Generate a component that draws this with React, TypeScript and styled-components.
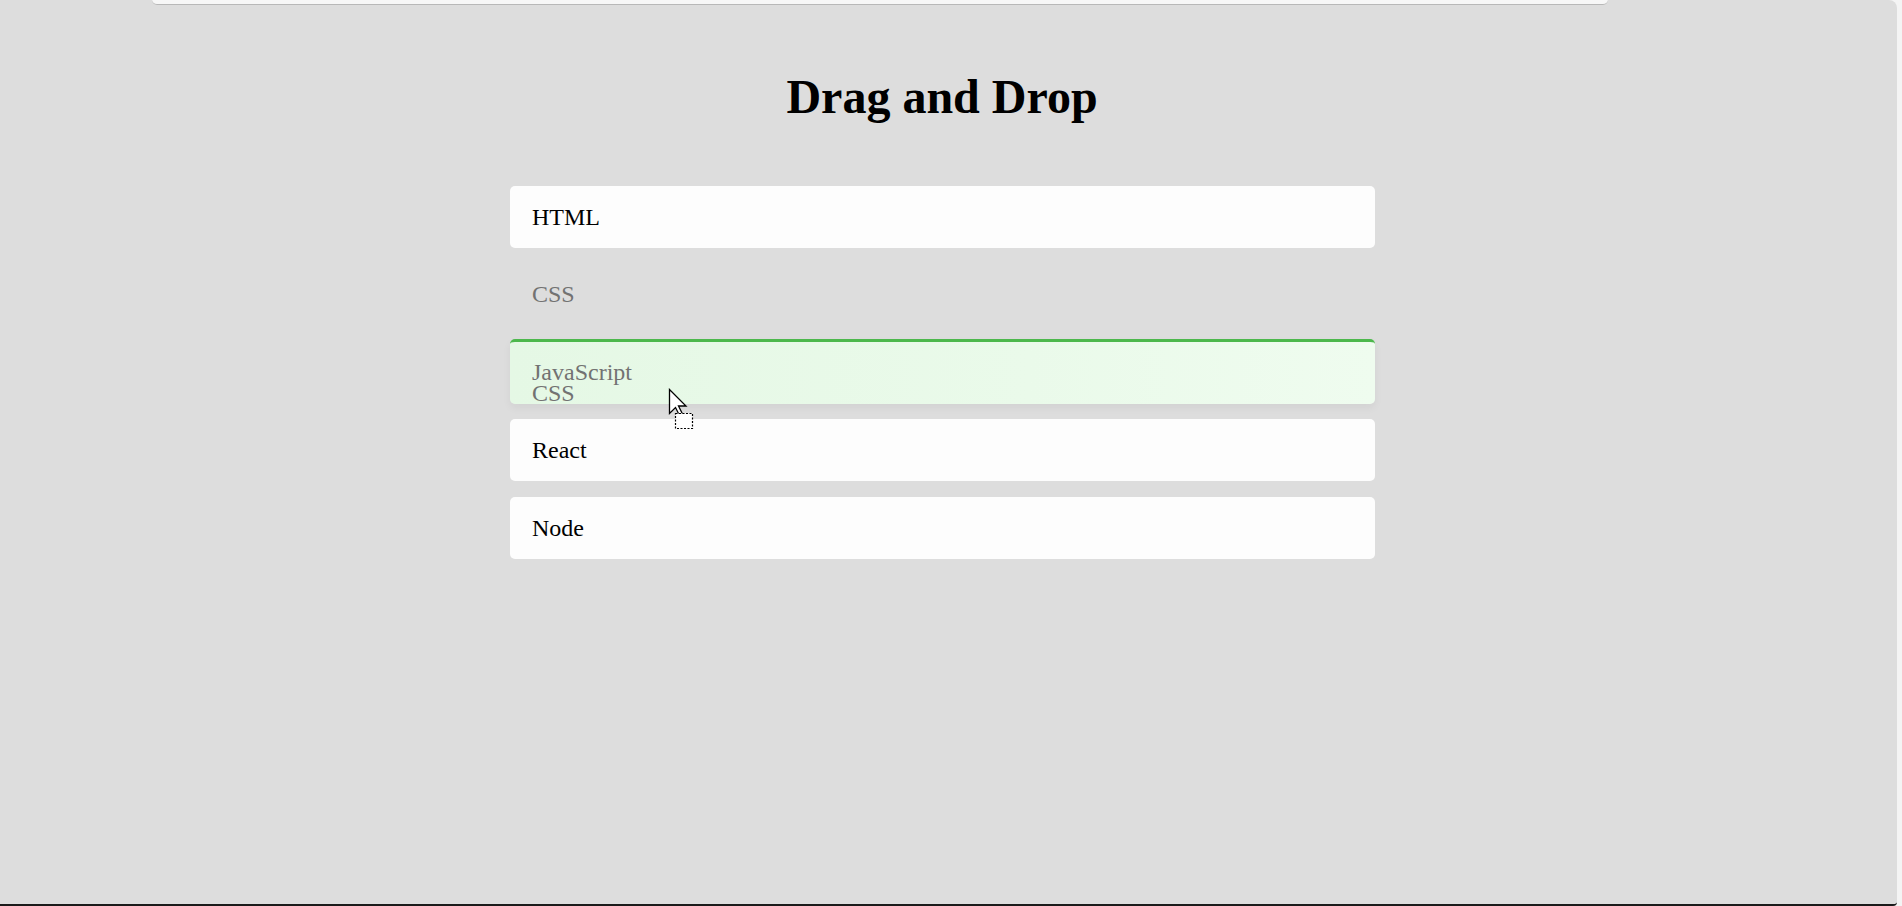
import React from "react";
import styled, { createGlobalStyle } from "styled-components";

const Global = createGlobalStyle`
  html, body { margin: 0; padding: 0; }
  body {
    background: #f4f4f4;
    font-family: "Liberation Serif", "Times New Roman", serif;
    overflow: hidden;
  }
`;

const Stage = styled.div`
  position: relative;
  box-sizing: border-box;
  width: calc(100% - 5px);
  height: 906px;
  background: #dddddd;
  border-bottom: 2px solid #1a1a1a;
  border-top-right-radius: 8px;
  border-bottom-right-radius: 4px;
  padding: 70px 13px 0 0;
  display: flex;
  flex-direction: column;
  align-items: center;
`;

const TopBar = styled.div`
  position: absolute;
  top: 0;
  left: 152px;
  width: 1456px;
  height: 4px;
  background: #f7f7f7;
  border-bottom: 1px solid #b8b8b8;
  border-bottom-left-radius: 6px;
  border-bottom-right-radius: 6px;
`;

const Title = styled.h1`
  margin: 0;
  font-size: 48px;
  font-weight: 700;
  line-height: 53px;
  color: #000;
`;

const List = styled.div`
  position: relative;
  margin-top: 63px;
  width: 865px;
  display: flex;
  flex-direction: column;
  gap: 15.75px;
`;

type CardProps = { $variant?: "normal" | "placeholder" | "over" };

const Card = styled.div<CardProps>`
  position: relative;
  box-sizing: border-box;
  height: ${(p) => (p.$variant === "over" ? "65px" : "62px")};
  margin-top: ${(p) => (p.$variant === "over" ? "-3px" : "0")};
  padding: 0 22.5px;
  display: flex;
  align-items: center;
  border-radius: 5px;
  font-size: 24px;
  color: ${(p) => (p.$variant === "normal" || !p.$variant ? "#000" : "#727272")};
  background: ${(p) =>
    p.$variant === "placeholder"
      ? "transparent"
      : p.$variant === "over"
      ? "linear-gradient(90deg, #e5f8e5 0%, #eafaea 60%, #effcef 100%)"
      : "#fdfdfd"};
  border-top: ${(p) => (p.$variant === "over" ? "3px solid #4cb84c" : "none")};
  box-shadow: ${(p) =>
    p.$variant === "over" ? "0 4px 8px rgba(0,0,0,0.05)" : "none"};
`;

const Ghost = styled.div`
  position: absolute;
  left: 22.5px;
  top: 38.5px;
  font-size: 24px;
  line-height: 27px;
  color: #727272;
  pointer-events: none;
`;

const Cursor = styled.svg`
  position: absolute;
  left: 668px;
  top: 388px;
  pointer-events: none;
`;

export default function App() {
  return (
    <>
      <Global />
      <Stage>
        <TopBar />
        <Title>Drag and Drop</Title>
        <List>
          <Card>HTML</Card>
          <Card $variant="placeholder">CSS</Card>
          <Card $variant="over">
            JavaScript
            <Ghost>CSS</Ghost>
          </Card>
          <Card>React</Card>
          <Card>Node</Card>
        </List>
        <Cursor width="30" height="44" viewBox="0 0 30 44">
          <path
            d="M1.5 1.5 L1.5 25.5 L7.5 19.5 L12 28.5 L15 27 L10.5 18 L18 18 Z"
            fill="#fff"
            stroke="#000"
            strokeWidth="1.3"
            strokeLinejoin="miter"
          />
          <rect
            x="7.5"
            y="25.5"
            width="17"
            height="15"
            fill="#fff"
            stroke="#000"
            strokeWidth="1.2"
            strokeDasharray="2 1.5"
          />
        </Cursor>
      </Stage>
    </>
  );
}
